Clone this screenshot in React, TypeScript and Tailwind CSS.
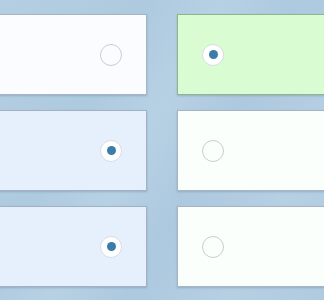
import React from 'react';

type Tile = { tone: string; selected: boolean; side: 'left' | 'right' };

const tiles: Tile[] = [
  { tone: 'bg-[#fbfcff] border-[#a7b5c3]', selected: false, side: 'left' },
  { tone: 'bg-[#d9fcd3] border-[#8db78a]', selected: true, side: 'right' },
  { tone: 'bg-[#e6effc] border-[#a3b2c2]', selected: true, side: 'left' },
  { tone: 'bg-[#fbfffb] border-[#a7b5c3]', selected: false, side: 'right' },
  { tone: 'bg-[#e6effc] border-[#a3b2c2]', selected: true, side: 'left' },
  { tone: 'bg-[#fbfffb] border-[#a7b5c3]', selected: false, side: 'right' },
];

const Radio: React.FC<{ checked: boolean }> = ({ checked }) => (
  <span
    className={`flex h-[22px] w-[22px] items-center justify-center rounded-full border-[1.5px] ${
      checked ? 'border-[#d8dde2] bg-white' : 'border-[#cccccc] bg-transparent'
    }`}
  >
    {checked && <span className="h-[9px] w-[9px] rounded-full bg-[#3b7cab]" />}
  </span>
);

export default function App() {
  return (
    <div className="h-[300px] w-[324px] overflow-hidden bg-[#b2cde2] bg-[linear-gradient(120deg,#b4cfe3_0%,#aecadf_30%,#b7d1e4_45%,#adc9df_60%,#b5cfe3_80%,#b0cbe0_100%)]">
      <div className="-ml-[33px] grid grid-cols-[180px_180px] gap-x-[30px] gap-y-[15px] pt-[14px]">
        {tiles.map((t, i) => (
          <div
            key={i}
            className={`flex h-[81px] items-center border shadow-[0_1px_2px_rgba(60,80,110,0.25)] ${t.tone} ${
              t.side === 'left' ? 'justify-end pr-[24px]' : 'justify-start pl-[24px]'
            }`}
          >
            <Radio checked={t.selected} />
          </div>
        ))}
      </div>
    </div>
  );
}
